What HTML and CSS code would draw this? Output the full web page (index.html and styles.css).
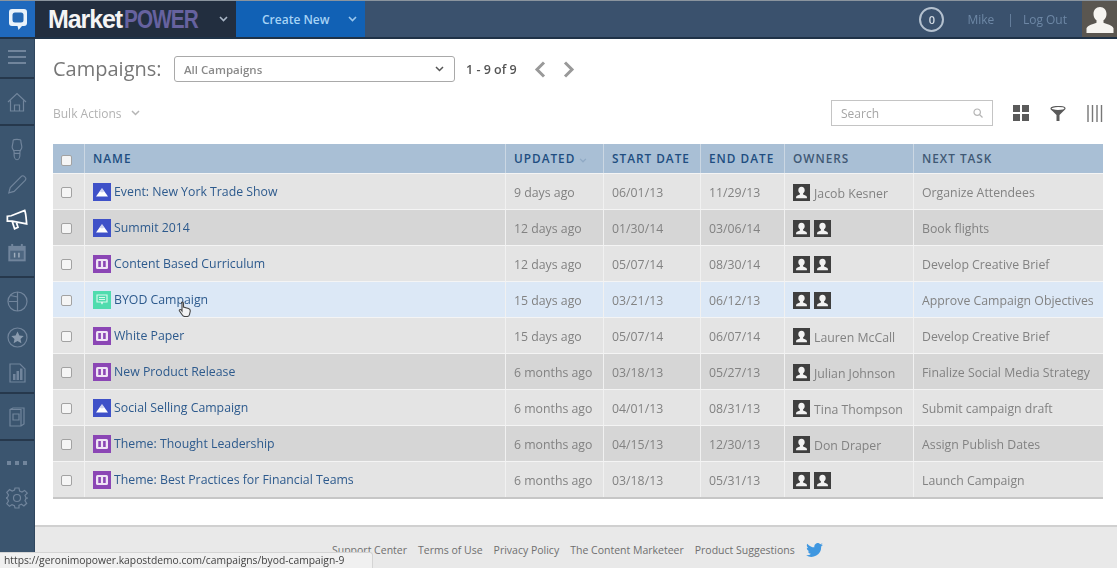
FILE: index.html
```html
<!DOCTYPE html>
<html lang="en">
<head>
<meta charset="utf-8">
<title>Campaigns</title>
<link rel="stylesheet" href="styles.css">
</head>
<body>
<svg class="defs" width="0" height="0" aria-hidden="true">
  <symbol id="person" viewBox="0 0 16 16"><rect width="16" height="16" fill="#3f3f3f"/><path d="M8 2.600c-1.900 0-3 1.400-3 3.200 0 1.300.6 2.400 1.500 3v1.100c-1.400.5-3.300 1-3.600 2.300v1.300h10.200v-1.300c-.3-1.300-2.200-1.800-3.600-2.300V8.800c.9-.6 1.500-1.700 1.500-3 0-1.800-1.100-3.200-3-3.200z" fill="#f2f2f2"/></symbol>
  <symbol id="ev" viewBox="0 0 18 18"><rect width="18" height="18" fill="#3f51c8"/><path d="M3 13.500 9 5l6 8.500z" fill="#fff"/><path d="m6.800 8.500 2.200 1 2.200-1L9 5z" fill="#3f51c8" opacity=".25"/></symbol>
  <symbol id="th" viewBox="0 0 18 18"><rect width="18" height="18" fill="#8b46b5"/><rect x="3" y="4" width="12" height="10" rx="1.500" fill="#efe4f5"/><rect x="5.300" y="6" width="2.600" height="6" fill="#8b46b5"/><rect x="10.100" y="6" width="2.600" height="6" fill="#8b46b5"/></symbol>
  <symbol id="gr" viewBox="0 0 18 18"><rect width="18" height="18" fill="#4fdcae"/><path d="M4 4h10v7H9.500L9 13l-.5-2H4z" fill="none" stroke="#d7f8ec" stroke-width="1.200"/><path d="M6 6.500h6M6 8.500h6" stroke="#d7f8ec"/></symbol>
</svg>

<header class="topbar">
  <div class="logo-box">
    <svg width="20" height="23" viewBox="0 0 20 23"><path d="M4 1h12a3 3 0 0 1 3 3v11a3 3 0 0 1-3 3h-2l-3.500 4-1-4H4a3 3 0 0 1-3-3V4a3 3 0 0 1 3-3z" fill="#e9f2fa"/><rect x="4.500" y="4.500" width="11" height="10" rx="2.500" fill="#2468b4"/></svg>
  </div>
  <div class="brand"><span class="brand-a">Market</span><span class="brand-b">POWER</span></div>
  <svg class="brand-chev" width="9" height="6" viewBox="0 0 9 6"><path d="m1 1 3.500 3.500L8 1" fill="none" stroke="#a9b6c6" stroke-width="1.600"/></svg>
  <div class="create">Create New
    <svg width="9" height="6" viewBox="0 0 9 6"><path d="m1 1 3.500 3.500L8 1" fill="none" stroke="#9cc8ee" stroke-width="1.600"/></svg>
  </div>
  <div class="top-right">
    <span class="count">0</span>
    <span class="user">Mike</span>
    <span class="sep">|</span>
    <span class="user">Log Out</span>
    <span class="avatar">
      <svg width="30" height="28" viewBox="0 0 30 28"><path d="M15 1c-4 0-6.500 3-6.500 7 0 2.800 1.200 5 3 6.300v2.400c-3 1.200-9 2.500-10 5.500V27h27v-4.800c-1-3-7-4.300-10-5.500v-2.400c1.800-1.300 3-3.500 3-6.300 0-4-2.500-7-6.500-7z" fill="#f6f4f0"/></svg>
    </span>
  </div>
</header>

<div class="shell">
  <nav class="sidebar">
    <div class="group g-menu">
      <svg width="18" height="16" viewBox="0 0 18 16"><path d="M0 2h18M0 8h18M0 14h18" stroke="#71859c" stroke-width="2"/></svg>
    </div>
    <div class="group g-home">
      <svg width="20" height="20" viewBox="0 0 20 20" fill="none" stroke="#71859c" stroke-width="1.200"><path d="M1 10 10 1.500 19 10M3.500 8.500V19h13V8.500M7.500 19v-6h5v6"/></svg>
    </div>
    <div class="group g-work">
      <svg class="i-bulb" width="14" height="24" viewBox="0 0 14 24" fill="none" stroke="#71859c" stroke-width="1.200"><path d="M3 2.500C3 1 11 1 11 2.500c0 3 1 5 1 7s-2 3-2 5v3c0 2-1 5-3 5s-3-3-3-5v-3c0-2-2-3-2-5s1-4 1-7zM4 13h6M4 16h6"/></svg>
      <svg class="i-pen" width="20" height="20" viewBox="0 0 20 20" fill="none" stroke="#71859c" stroke-width="1.200"><path d="M1.500 18.500 3 13 14.500 1.500a2 2 0 0 1 3 0l1 1a2 2 0 0 1 0 3L7 17z"/></svg>
      <svg class="i-horn" width="23" height="22" viewBox="0 0 23 22" fill="none" stroke="#fff" stroke-width="1.800"><path d="M1 7.500 5 7 19 1.500c1.500 4 1.500 9.500 2 14L6 12.500H1zM6 13l2.500 7.500 3.500-1.500-2-6"/></svg>
      <svg class="i-cal" width="20" height="20" viewBox="0 0 20 20"><rect x="1" y="3" width="18" height="16" fill="#71859c"/><rect x="4" y="1" width="2" height="4" fill="#71859c"/><rect x="14" y="1" width="2" height="4" fill="#71859c"/><rect x="3" y="8" width="14" height="9" fill="#4d6680"/><path d="M7.500 10v5M12 10v5" stroke="#a0aebd" stroke-width="1.500"/></svg>
    </div>
    <div class="group g-report">
      <svg width="21" height="21" viewBox="0 0 21 21" fill="none" stroke="#71859c" stroke-width="1.200"><circle cx="10.500" cy="10.500" r="9.500"/><path d="M10.500 1v19M10.500 10.500H1.800M10.500 6 3.500 4.500"/></svg>
      <svg width="21" height="21" viewBox="0 0 21 21"><circle cx="10.500" cy="10.500" r="9.500" fill="none" stroke="#71859c" stroke-width="1.200"/><path d="m10.500 4.500 1.900 4 4.300.5-3.200 2.900.9 4.300-3.900-2.200-3.900 2.200.9-4.300L4.300 9l4.300-.5z" fill="#8a9bae"/></svg>
      <svg width="17" height="20" viewBox="0 0 17 20"><path d="M1 1h10l5 5v13H1z" fill="none" stroke="#71859c" stroke-width="1.200"/><path d="M4 11h2.500v6H4zM7.500 8H10v9H7.500zM11 5.500h2.500V17H11z" fill="#71859c"/></svg>
    </div>
    <div class="group g-lib">
      <svg width="16" height="20" viewBox="0 0 16 20" fill="none" stroke="#71859c" stroke-width="1.200"><path d="M1 2.500 4 1h11v16l-3 2H1zM1 2.500h11V19M4 7h6v6H4z"/></svg>
    </div>
    <div class="group g-more">
      <svg width="20" height="4" viewBox="0 0 20 4"><path d="M0 0h4v4H0zM8 0h4v4H8zM16 0h4v4h-4z" fill="#71859c"/></svg>
      <svg width="22" height="22" viewBox="0 0 22 22" fill="none" stroke="#71859c" stroke-width="1.200"><circle cx="11" cy="11" r="3.500"/><path d="M9 1h4l.6 3 2.400 1 2.600-1.600 2.700 2.800L19 8.400l1 2.400 2 .2-2 .4-1 2.400 1.700 2.500-2.800 2.700-2.500-1.700-2.400 1L13 21H9l-.6-2.400-2.400-1-2.500 1.700-2.700-2.700L2.500 14l-1-2.400L0 11l1.500-.6 1-2.400-1.700-2.600 2.800-2.800L6.200 4l2.300-1z"/></svg>
    </div>
  </nav>

  <main class="main">
    <div class="title-row">
      <h1 class="title">Campaigns:</h1>
      <div class="select">All Campaigns
        <svg width="9" height="6" viewBox="0 0 9 6"><path d="m1 1 3.500 3.500L8 1" fill="none" stroke="#555" stroke-width="1.500"/></svg>
      </div>
      <span class="pager">1 - 9 of 9</span>
      <svg class="arrow-l" width="12" height="17" viewBox="0 0 12 17"><path d="M10 1.500 3 8.500l7 7" fill="none" stroke="#999" stroke-width="3"/></svg>
      <svg width="12" height="17" viewBox="0 0 12 17"><path d="m2 1.500 7 7-7 7" fill="none" stroke="#999" stroke-width="3"/></svg>
    </div>
    <div class="tools-row">
      <div class="bulk">Bulk Actions
        <svg width="9" height="6" viewBox="0 0 9 6"><path d="m1 1 3.500 3.500L8 1" fill="none" stroke="#b5b5b5" stroke-width="1.500"/></svg>
      </div>
      <div class="search"><span>Search</span>
        <svg width="10" height="10" viewBox="0 0 10 10" fill="none" stroke="#b5b5b5" stroke-width="1.200"><circle cx="4.200" cy="4.200" r="3.200"/><path d="m6.500 6.500 3 3"/></svg>
      </div>
      <svg class="tool t-grid" width="16" height="16" viewBox="0 0 16 16"><path d="M0 0h7v7H0zM9 0h7v7H9zM0 9h7v7H0zM9 9h7v7H9z" fill="#5a5a5a"/></svg>
      <svg class="tool" width="16" height="15" viewBox="0 0 16 15"><ellipse cx="8" cy="2.500" rx="7" ry="2" fill="none" stroke="#5a5a5a" stroke-width="1.200"/><path d="M1.500 4 6.500 9v6h3V9l5-5z" fill="#5a5a5a"/></svg>
      <svg class="tool" width="16" height="17" viewBox="0 0 16 17"><path d="M1 0v17M5.500 0v17M10 0v17M14.500 0v17" stroke="#777" stroke-width="1.400"/></svg>
    </div>

    <table class="grid">
      <colgroup><col class="c-check"><col class="c-name"><col class="c-upd"><col class="c-start"><col class="c-end"><col class="c-own"><col class="c-next"></colgroup>
      <thead>
        <tr><th class="cb"><span class="box"></span></th><th>NAME</th><th>UPDATED <svg width="8" height="5" viewBox="0 0 9 6"><path d="m1 1 3.500 3.500L8 1" fill="none" stroke="#8fa9c4" stroke-width="1.500"/></svg></th><th>START DATE</th><th>END DATE</th><th class="muted-h">OWNERS</th><th class="muted-h">NEXT TASK</th></tr>
      </thead>
      <tbody>
        <tr><td class="cb"><span class="box"></span></td><td><svg class="ico"><use href="#ev"/></svg><a>Event: New York Trade Show</a></td><td>9 days ago</td><td>06/01/13</td><td>11/29/13</td><td><svg class="pp"><use href="#person"/></svg><span class="owner">Jacob Kesner</span></td><td>Organize Attendees</td></tr>
        <tr><td class="cb"><span class="box"></span></td><td><svg class="ico"><use href="#ev"/></svg><a>Summit 2014</a></td><td>12 days ago</td><td>01/30/14</td><td>03/06/14</td><td><svg class="pp"><use href="#person"/></svg><svg class="pp"><use href="#person"/></svg></td><td>Book flights</td></tr>
        <tr><td class="cb"><span class="box"></span></td><td><svg class="ico"><use href="#th"/></svg><a>Content Based Curriculum</a></td><td>12 days ago</td><td>05/07/14</td><td>08/30/14</td><td><svg class="pp"><use href="#person"/></svg><svg class="pp"><use href="#person"/></svg></td><td>Develop Creative Brief</td></tr>
        <tr class="hover"><td class="cb"><span class="box"></span></td><td class="cursor-cell"><svg class="ico"><use href="#gr"/></svg><a>BYOD Campaign</a><svg class="hand" width="14" height="17" viewBox="0 0 14 17"><path d="M3.500 1.500c1-.8 2 0 2 1v3.500l5 1.500c1.500.5 2 1.500 1.700 3l-.7 3c-.3 1.200-1.200 2-2.500 2H7c-1.200 0-2-.5-2.700-1.500L1.500 10c-.7-1.200.8-2 1.800-1L4 10V2.500z" fill="#f3f3f3" stroke="#444" stroke-width="1.100"/></svg></td><td>15 days ago</td><td>03/21/13</td><td>06/12/13</td><td><svg class="pp"><use href="#person"/></svg><svg class="pp"><use href="#person"/></svg></td><td>Approve Campaign Objectives</td></tr>
        <tr><td class="cb"><span class="box"></span></td><td><svg class="ico"><use href="#th"/></svg><a>White Paper</a></td><td>15 days ago</td><td>05/07/14</td><td>06/07/14</td><td><svg class="pp"><use href="#person"/></svg><span class="owner">Lauren McCall</span></td><td>Develop Creative Brief</td></tr>
        <tr><td class="cb"><span class="box"></span></td><td><svg class="ico"><use href="#th"/></svg><a>New Product Release</a></td><td>6 months ago</td><td>03/18/13</td><td>05/27/13</td><td><svg class="pp"><use href="#person"/></svg><span class="owner">Julian Johnson</span></td><td>Finalize Social Media Strategy</td></tr>
        <tr><td class="cb"><span class="box"></span></td><td><svg class="ico"><use href="#ev"/></svg><a>Social Selling Campaign</a></td><td>6 months ago</td><td>04/01/13</td><td>08/31/13</td><td><svg class="pp"><use href="#person"/></svg><span class="owner">Tina Thompson</span></td><td>Submit campaign draft</td></tr>
        <tr><td class="cb"><span class="box"></span></td><td><svg class="ico"><use href="#th"/></svg><a>Theme: Thought Leadership</a></td><td>6 months ago</td><td>04/15/13</td><td>12/30/13</td><td><svg class="pp"><use href="#person"/></svg><span class="owner">Don Draper</span></td><td>Assign Publish Dates</td></tr>
        <tr><td class="cb"><span class="box"></span></td><td><svg class="ico"><use href="#th"/></svg><a>Theme: Best Practices for Financial Teams</a></td><td>6 months ago</td><td>03/18/13</td><td>05/31/13</td><td><svg class="pp"><use href="#person"/></svg><svg class="pp"><use href="#person"/></svg></td><td>Launch Campaign</td></tr>
      </tbody>
    </table>

    <footer class="footer">
      <span>Support Center</span><span>Terms of Use</span><span>Privacy Policy</span><span>The Content Marketeer</span><span>Product Suggestions</span>
      <svg width="17" height="14" viewBox="0 0 24 20"><path d="M24 2.400c-.9.400-1.800.7-2.800.8 1-.6 1.800-1.600 2.200-2.700-1 .6-2 1-3.100 1.200A4.900 4.900 0 0 0 11.900 6.200C7.800 6 4.200 4 1.700.9c-1.300 2.200-.7 5.100 1.500 6.600-.8 0-1.600-.2-2.200-.6 0 2.300 1.600 4.500 3.900 5-.7.200-1.500.2-2.200.1.600 2 2.400 3.400 4.600 3.400A9.900 9.900 0 0 1 0 17.500 14 14 0 0 0 21.500 5c1-.7 1.800-1.600 2.500-2.600z" fill="#3f97e0"/></svg>
    </footer>
  </main>
</div>
<div class="status">https://geronimopower.kapostdemo.com/campaigns/byod-campaign-9</div>
</body>
</html>
```
FILE: styles.css
```css
* { box-sizing: border-box; }
html, body { margin: 0; height: 100%; overflow: hidden; }
body { font-family: "Open Sans", "Liberation Sans", sans-serif; font-size: 12px; color: #777; background: #fff; position: relative; filter: blur(.4px); }
.defs { position: absolute; }

.topbar { height: 39px; display: flex; align-items: center; background: #3a516d; border-bottom: 2px solid #1f3247; border-top: 1px solid #8a949e; position: relative; }
.logo-box { width: 35px; height: 36px; background: #1f69bd; display: flex; align-items: center; justify-content: center; }
.brand { width: 201px; height: 36px; padding-left: 13px; background: #222e3f; font-family: "Liberation Sans", sans-serif; font-weight: 700; font-size: 25px; line-height: 36px; letter-spacing: -1.100px; white-space: nowrap; }
.brand-a { color: #f4f4f4; }
.brand-b { color: #66629f; margin-left: 2px; display: inline-block; transform: scaleX(.83); transform-origin: left; }
.brand-chev { position: absolute; left: 219px; top: 15px; }
.create { width: 129px; height: 36px; background: #1161b5; color: #a6d3f5; font-size: 12px; font-weight: 600; display: flex; align-items: center; padding-left: 26px; gap: 18px; }
.top-right { margin-left: auto; display: flex; align-items: center; color: #6d87a5; font-size: 12px; height: 36px; }
.count { width: 25px; height: 25px; border: 2px solid #b4c1cf; border-radius: 50%; color: #d5dde5; font-size: 11px; font-weight: 600; display: flex; align-items: center; justify-content: center; margin-right: 23px; }
.sep { margin: 0 9px 0 13px; }
.avatar { width: 35px; height: 36px; margin-left: 15px; background: #5a5650; display: flex; align-items: flex-end; justify-content: center; padding-bottom: 3px; }

.shell { display: flex; height: 529px; }
.sidebar { width: 35px; flex: none; background: #3b556f; display: flex; flex-direction: column; border-right: 1px solid #2f465e; }
.group { display: flex; flex-direction: column; align-items: center; border-bottom: 2px solid #26384c; }
.g-menu { height: 40px; padding-top: 10px; }
.g-home { height: 47px; padding-top: 13px; }
.g-work { height: 152px; padding-top: 12px; }
.g-work svg { margin-bottom: 14px; }
.g-work .i-pen { margin-bottom: 15px; }
.g-work .i-horn { margin-bottom: 12px; }
.g-report { height: 116px; padding-top: 13px; gap: 15px; }
.g-lib { height: 47px; padding-top: 13px; }
.g-more { flex: 1; border-bottom: 0; padding-top: 20px; gap: 22px; }

.main { flex: 1; min-width: 0; display: flex; flex-direction: column; padding-top: 16px; }
.title-row { display: flex; align-items: center; height: 28px; padding-left: 18px; }
.title { margin: 0; font-size: 20px; font-weight: 400; color: #777; line-height: 28px; width: 121px; }
.select { width: 281px; height: 26px; border: 1px solid #a9a9a9; border-radius: 3px; padding: 0 10px 0 9px; display: flex; align-items: center; justify-content: space-between; font-size: 11.500px; font-weight: 600; color: #8a8a8a; }
.pager { margin: 0 17px 0 11px; color: #555; font-size: 12.500px; font-weight: 600; }
.arrow-l { margin-right: 17px; }
.tools-row { display: flex; align-items: center; height: 28px; margin-top: 16px; padding: 0 14px 0 18px; }
.bulk { display: flex; align-items: center; gap: 9px; color: #b2b2b2; font-size: 12px; margin-right: auto; }
.search { width: 162px; height: 26px; border: 1px solid #c4c4c4; padding: 0 9px; display: flex; align-items: center; justify-content: space-between; color: #a5a5a5; font-size: 12px; }
.tool { margin-left: 21px; }
.t-grid { margin-left: 20px; }

.grid { width: 1050px; margin: 17px 0 0 18px; border-collapse: separate; border-spacing: 0; table-layout: fixed; border-bottom: 2px solid #c6c6c6; }
.c-check { width: 31px; } .c-name { width: 421px; } .c-upd { width: 98px; } .c-start { width: 97px; } .c-end { width: 84px; } .c-own { width: 129px; } .c-next { width: 190px; }
.grid th { height: 29px; background: #a9bfd5; color: #204d80; font-size: 11.800px; font-weight: 600; letter-spacing: 1px; text-align: left; padding: 0 0 2px 8px; border-left: 1px solid #cbd7e3; }
.grid th.cb, .grid td.cb { border-left: 0; padding: 0 5px 0 0; text-align: center; }
.grid th.muted-h { color: #3f5874; }
.grid td { height: 36px; background: #e4e4e4; color: #828282; font-size: 12.300px; padding: 1px 0 0 8px; border-left: 1px solid #f1f1f1; border-top: 1px solid #f4f4f4; white-space: nowrap; overflow: hidden; }
.grid tbody tr:nth-child(even) td { background: #d6d6d6; }
.grid tbody tr.hover td { background: #dce8f6; }
.grid a { color: #2d5a8d; }
.box { display: inline-block; width: 11px; height: 11px; border: 1px solid #a2a2a2; border-radius: 2px; background: #f5f5f5; vertical-align: middle; }
.ico { width: 18px; height: 18px; vertical-align: -5px; margin-right: 3px; }
.pp { width: 17px; height: 17px; vertical-align: -5px; margin-right: 4px; }
.owner { vertical-align: -2px; }
.cursor-cell { position: relative; }
.hand { position: absolute; left: 93px; top: 19px; }

.footer { flex: 1; margin-top: 26px; background: #e9e9e9; border-top: 2px solid #d0d0d0; display: flex; align-items: center; padding: 4px 0 0 297px; gap: 11px; color: #6f6f6f; font-size: 10.500px; }
.status { position: absolute; left: 0; bottom: 0; width: 373px; height: 16px; background: #f0f0f0; border-top: 1px solid #d4d4d4; border-right: 1px solid #d4d4d4; border-radius: 0 3px 0 0; color: #3f3f3f; font-size: 10.300px; line-height: 15px; padding-left: 4px; white-space: nowrap; }
```
